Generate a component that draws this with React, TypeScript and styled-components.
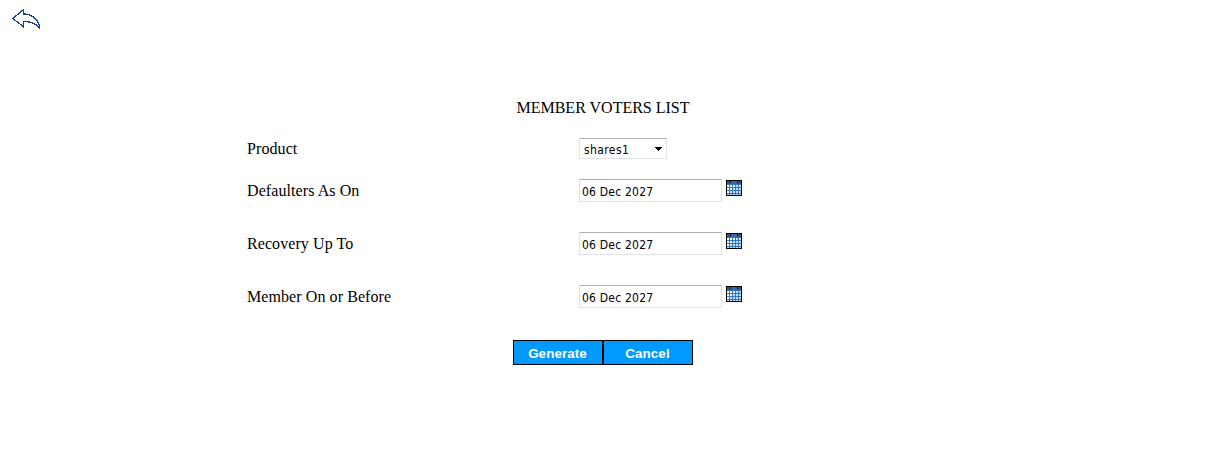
import React from "react";
import styled, { createGlobalStyle } from "styled-components";

const GlobalStyle = createGlobalStyle`
  body { margin: 0; background: #fff; color: #000; font-family: "Liberation Serif", "Times New Roman", serif; font-size: 16px; }
  *, *::before, *::after { box-sizing: border-box; }
`;

const Page = styled.main`
  display: flex;
  flex-direction: column;
  height: 449px;
  overflow: hidden;
`;

const TopBar = styled.header`
  height: 98px;
  padding: 8px 0 0 11px;
`;

const BackLink = styled.a`
  display: block;
  width: 32px;
  height: 24px;
  svg { display: block; }
`;

const Form = styled.form`
  width: 712px;
  margin-left: 247px;
`;

const Title = styled.h1`
  width: 712px;
  margin: 0;
  height: 40px;
  font-size: 16px;
  font-weight: 400;
  line-height: 19px;
  text-align: center;
`;

const Row = styled.div<{ $height: number }>`
  display: grid;
  grid-template-columns: 332px 1fr;
  align-items: start;
  height: ${(p) => p.$height}px;
`;

const Label = styled.label<{ $top: number }>`
  padding-top: ${(p) => p.$top}px;
  line-height: 18px;
  letter-spacing: 0.08px;
  white-space: nowrap;
`;

const Controls = styled.div`
  display: flex;
  gap: 4px;
  align-items: flex-start;
`;

const Field = styled.div<{ $width: number; $height: number }>`
  display: flex;
  align-items: center;
  justify-content: space-between;
  width: ${(p) => p.$width}px;
  height: ${(p) => p.$height}px;
  border: 1px solid #e2e3ea;
  border-top-color: #abadb3;
  border-radius: 1px;
  font-family: "DejaVu Sans Condensed", "DejaVu Sans", sans-serif;
  font-size: 12px;
  letter-spacing: 0.22px;
`;

const SelectField = styled(Field)`
  padding: 0 4px;
`;

const SelectValue = styled.span`
  padding-top: 2px;
  letter-spacing: 0.4px;
`;

const DateInput = styled(Field)`
  padding: 2px 2px 0 2px;
`;

const CalendarButton = styled.span`
  display: block;
  width: 16px;
  height: 16px;
  margin-top: 1px;
  svg { display: block; }
`;

const Actions = styled.div`
  display: flex;
  width: 180px;
  margin: 2px 0 0 266px;
`;

const ActionButton = styled.button`
  width: 90px;
  height: 25px;
  padding: 1px 1px 0 0;
  border: 1px solid #000;
  border-radius: 0;
  background: #0099ff;
  color: #fff;
  font: bold 13.33px "Liberation Sans", Arial, sans-serif;
  letter-spacing: 0.12px;
`;

const BackArrow = () => (
  <svg width="32" height="24" viewBox="0 0 32 24" fill="none" stroke="#1c3f8e" strokeWidth="1.3" shapeRendering="crispEdges">
    <path d="M1.7 10.5 L12.5 1.7 V6 C20 6 28.5 11.5 28.5 20 C25 15.5 20 13.5 12.5 13.5 V18.7 Z" />
  </svg>
);

const DropArrow = () => (
  <svg width="7" height="4" viewBox="0 0 7 4" shapeRendering="crispEdges">
    <path d="M0 0H7V1H6V2H5V3H4V4H3V3H2V2H1V1H0Z" />
  </svg>
);

const CalendarIcon = () => (
  <svg width="16" height="16" viewBox="0 0 16 16" shapeRendering="crispEdges">
    <rect width="16" height="16" fill="#000" />
    <rect x="1" y="1" width="14" height="3" fill="#45515f" />
    <rect x="5" y="1" width="6" height="3" fill="#2869b0" />
    <rect x="1" y="4" width="14" height="11" fill="#3478c0" />
    {[5, 8, 11, 14].map((y, r) =>
      [1, 4, 7, 10, 13].map((x, c) => (
        <rect key={`${x}-${y}`} x={x} y={y} width="2" height={r === 3 ? 1 : 2} fill={r + c < 3 ? "#ffffff" : "#c6dcf3"} />
      ))
    )}
    <path d="M4 1h1v2h-1zM11 1h1v2h-1z" fill="#0b1522" />
  </svg>
);

const dates = [
  { label: "Defaulters As On", value: "06 Dec 2027" },
  { label: "Recovery Up To", value: "06 Dec 2027" },
  { label: "Member On or Before", value: "06 Dec 2027" },
];

export default function App() {
  return (
    <>
      <GlobalStyle />
      <Page>
        <TopBar>
          <BackLink aria-label="Back"><BackArrow /></BackLink>
        </TopBar>
        <Form onSubmit={(e) => e.preventDefault()}>
          <Title>MEMBER VOTERS LIST</Title>
          <Row $height={41}>
            <Label $top={2}>Product</Label>
            <Controls>
              <SelectField $width={88} $height={21}><SelectValue>shares1</SelectValue><DropArrow /></SelectField>
            </Controls>
          </Row>
          {dates.map((d) => (
            <Row key={d.label} $height={53}>
              <Label $top={3}>{d.label}</Label>
              <Controls>
                <DateInput $width={143} $height={23}>{d.value}</DateInput>
                <CalendarButton><CalendarIcon /></CalendarButton>
              </Controls>
            </Row>
          ))}
          <Actions>
            <ActionButton type="submit">Generate</ActionButton>
            <ActionButton type="button">Cancel</ActionButton>
          </Actions>
        </Form>
      </Page>
    </>
  );
}
